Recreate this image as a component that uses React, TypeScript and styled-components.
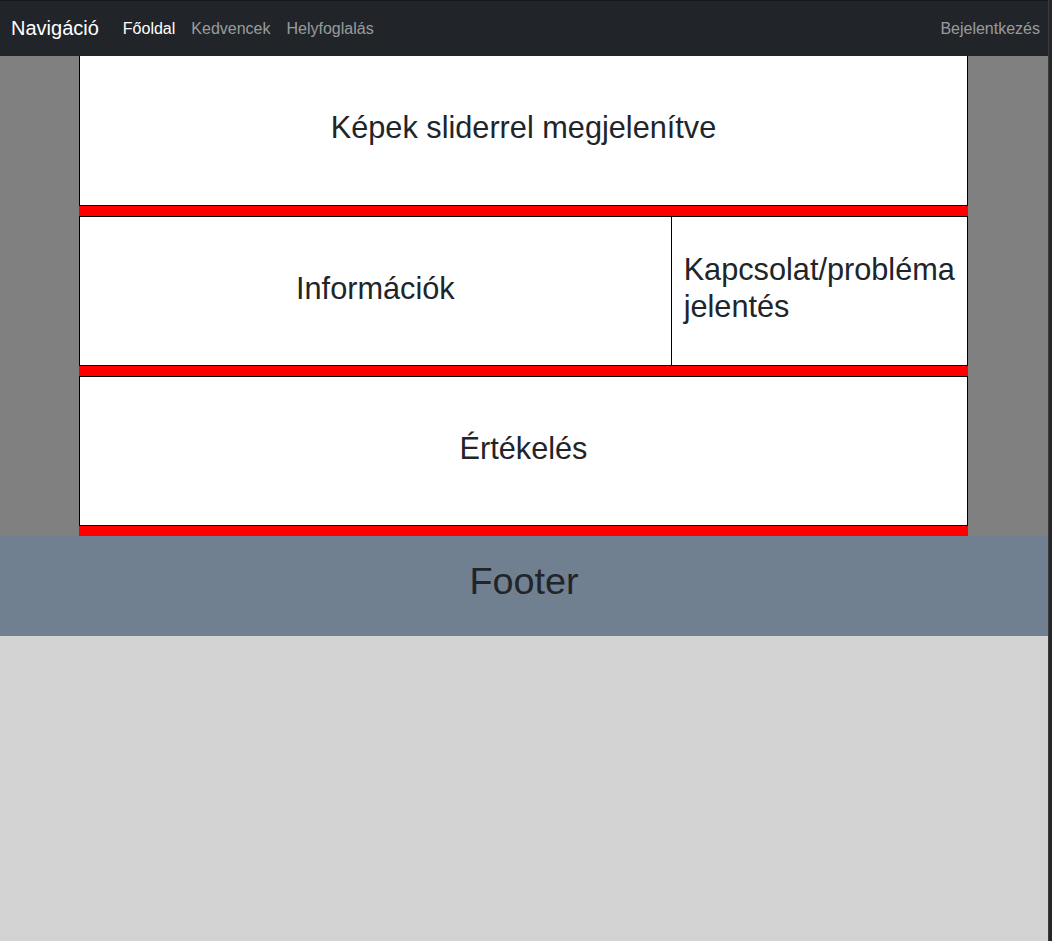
import styled, { createGlobalStyle } from "styled-components";

const GlobalStyle = createGlobalStyle`
  * {
    box-sizing: border-box;
  }
  body {
    margin: 0;
    background: #d3d3d3;
    font-family: "Liberation Sans", Arial, sans-serif;
    color: #212529;
  }
`;

const Shell = styled.div`
  display: flex;
  min-height: 100vh;
`;

const Column = styled.div`
  flex: 1;
  display: flex;
  flex-direction: column;
  background: #d3d3d3;
`;

const EdgeStrip = styled.div`
  width: 4px;
  background: #25272a;
  border-left: 1px solid #3a3c40;
`;

const Navbar = styled.nav`
  height: 56px;
  background: #212529;
  border-top: 1px solid #16181b;
  display: flex;
  align-items: center;
  padding: 0 0 0 11px;
`;

const Brand = styled.a`
  font-size: 20px;
  color: #fff;
  margin-right: 16px;
  text-decoration: none;
`;

const NavLink = styled.a<{ $active?: boolean }>`
  font-size: 16px;
  padding: 8px;
  color: ${(p) => (p.$active ? "#fff" : "rgba(255, 255, 255, 0.55)")};
  text-decoration: none;
`;

const Spacer = styled.div`
  flex: 1;
`;

const Main = styled.main`
  background: #808080;
`;

const Container = styled.div`
  width: 889px;
  margin: 0 0 0 79px;
`;

const Row = styled.div`
  display: grid;
  grid-template-columns: 2fr 1fr;
`;

const Panel = styled.section<{ $first?: boolean; $left?: boolean }>`
  height: 150px;
  background: #fff;
  border: 1px solid #000;
  border-top: ${(p) => (p.$first ? "none" : "1px solid #000")};
  display: flex;
  align-items: center;
  justify-content: ${(p) => (p.$left ? "flex-start" : "center")};
  padding: 0 12px;

  & + & {
    border-left: none;
  }
`;

const Heading = styled.h2`
  margin: 0 0 4px;
  font-size: 30.7px;
  font-weight: 400;
  line-height: 1.2;
`;

const Divider = styled.div`
  height: 10px;
  background: #ff0000;
`;

const Footer = styled.footer`
  height: 100px;
  background: #708090;
  display: flex;
  align-items: center;
  justify-content: center;
`;

const FooterTitle = styled.h1`
  margin: 0 0 8px;
  font-size: 37.8px;
  font-weight: 400;
  line-height: 1.2;
`;

export default function App() {
  return (
    <>
      <GlobalStyle />
      <Shell>
        <Column>
          <Navbar>
            <Brand href="#">Navigáció</Brand>
            <NavLink $active href="#">
              Főoldal
            </NavLink>
            <NavLink href="#">Kedvencek</NavLink>
            <NavLink href="#">Helyfoglalás</NavLink>
            <Spacer />
            <NavLink href="#">Bejelentkezés</NavLink>
          </Navbar>
          <Main>
            <Container>
              <Panel $first>
                <Heading>Képek sliderrel megjelenítve</Heading>
              </Panel>
              <Divider />
              <Row>
                <Panel>
                  <Heading>Információk</Heading>
                </Panel>
                <Panel $left>
                  <Heading>Kapcsolat/probléma jelentés</Heading>
                </Panel>
              </Row>
              <Divider />
              <Panel>
                <Heading>Értékelés</Heading>
              </Panel>
              <Divider />
            </Container>
          </Main>
          <Footer>
            <FooterTitle>Footer</FooterTitle>
          </Footer>
        </Column>
        <EdgeStrip />
      </Shell>
    </>
  );
}
